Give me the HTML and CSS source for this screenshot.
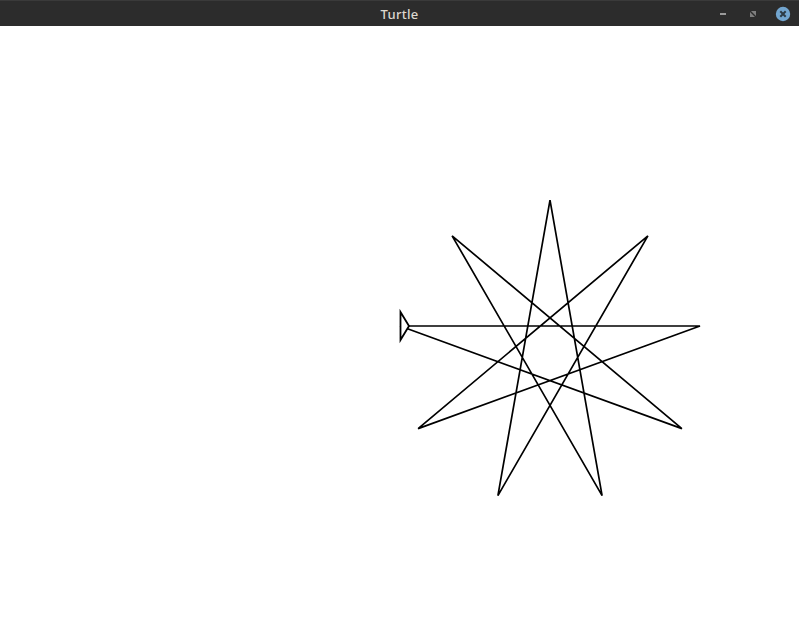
FILE: index.html
```html
<!DOCTYPE html>
<html>
<head>
<meta charset="utf-8">
<link rel="stylesheet" href="styles.css">
</head>
<body>
<div class="window">
  <header class="titlebar">
    <div class="spacer"></div>
    <div class="title">Turtle</div>
    <div class="controls">
      <svg class="btn min" width="14" height="14" viewBox="0 0 14 14"><rect x="4" y="6" width="6" height="2" fill="#9a9a9a"/></svg>
      <svg class="btn max" width="14" height="14" viewBox="0 0 14 14"><path d="M5 4h5v5z M4 5v5h5z" fill="#7e7e7e"/></svg>
      <svg class="btn close" width="16" height="16" viewBox="0 0 16 16"><circle cx="8" cy="8" r="7.2" fill="#72a5cf"/><path d="M5.3 5.3l5.4 5.4M10.7 5.3l-5.4 5.4" stroke="#2c3a45" stroke-width="2"/></svg>
    </div>
  </header>
  <svg class="canvas" width="799" height="600" viewBox="0 0 799 600">
    <g transform="translate(0,-26)">
      <polyline class="star" points="400,326 700,326 418.1,428.6 647.9,235.8 497.9,495.6 550,200.2 602.1,495.6 452.1,235.8 681.9,428.6 400,326"/>
      <polygon class="turtle" points="400.5,312 400.5,340 409,326"/>
    </g>
  </svg>
</div>
</body>
</html>
```
FILE: styles.css
```css
html, body { margin: 0; padding: 0; background: #ffffff; }
.window { width: 799px; height: 626px; display: flex; flex-direction: column; overflow: hidden; }
.titlebar {
  height: 26px;
  flex: none;
  background: #2c2c2c;
  border-top: 1px solid #3a3a3a;
  box-sizing: border-box;
  display: grid;
  grid-template-columns: 1fr auto 1fr;
  align-items: center;
}
.title {
  font-family: "Noto Sans", "DejaVu Sans", sans-serif;
  font-size: 13px;
  font-weight: 500;
  color: #dcd8cf;
  letter-spacing: 0.3px;
}
.controls {
  display: flex;
  justify-content: flex-end;
  align-items: center;
  padding-right: 8px;
}
.btn { display: block; }
.max { margin-left: 16px; }
.close { margin-left: 15px; }
.canvas { display: block; background: #ffffff; }
.star { fill: none; stroke: #000; stroke-width: 1.7; stroke-linejoin: miter; }
.turtle { fill: #fff; stroke: #000; stroke-width: 1.8; }
```
